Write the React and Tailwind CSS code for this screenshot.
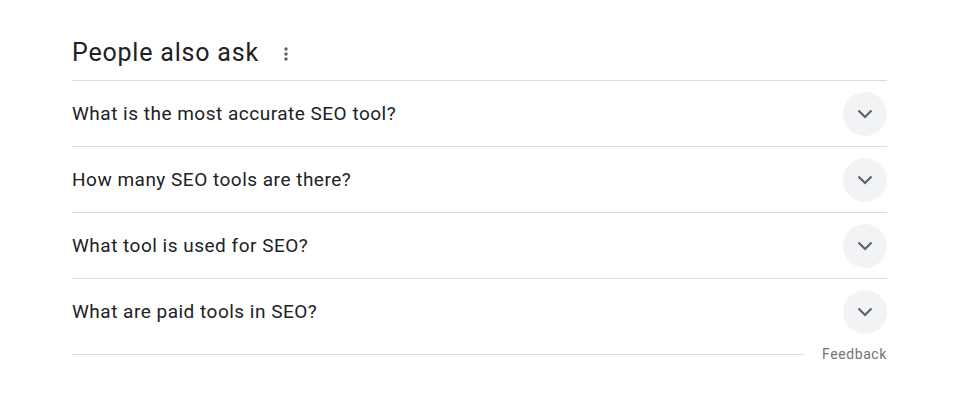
import React from "react";

const questions = [
  "What is the most accurate SEO tool?",
  "How many SEO tools are there?",
  "What tool is used for SEO?",
  "What are paid tools in SEO?",
];

function Chevron() {
  return (
    <svg width="16" height="10" viewBox="0 0 16 10" fill="none">
      <polyline points="1.5,1.5 8,8 14.5,1.5" stroke="#5f6368" strokeWidth="2.2" />
    </svg>
  );
}

export default function App() {
  return (
    <div
      className="w-[975px] h-[400px] bg-white"
      style={{ fontFamily: "Roboto, Arial, sans-serif" }}
    >
      <div className="ml-[72px] w-[815px] pt-[37px]">
        <div className="flex items-center h-[44px] border-b border-[#dadce0]">
          <span className="text-[25px] leading-[32px] tracking-[0.8px] text-[#202124] -mt-[11px]">
            People also ask
          </span>
          <span className="ml-[17px] -mt-[10px] flex items-center">
            <svg width="20" height="20" viewBox="0 0 24 24" fill="#5f6368">
              <path d="M12 8c1.1 0 2-.9 2-2s-.9-2-2-2-2 .9-2 2 .9 2 2 2zm0 2c-1.1 0-2 .9-2 2s.9 2 2 2 2-.9 2-2-.9-2-2-2zm0 6c-1.1 0-2 .9-2 2s.9 2 2 2 2-.9 2-2-.9-2-2-2z" />
            </svg>
          </span>
        </div>
        {questions.map((q, i) => (
          <div
            key={q}
            className={`flex items-center justify-between h-[66px] ${
              i < questions.length - 1 ? "border-b border-[#dadce0]" : ""
            }`}
          >
            <span className="text-[19px] leading-[24px] tracking-[0.5px] text-[#202124]">{q}</span>
            <div className="w-[44px] h-[44px] rounded-full bg-[#f1f3f4] flex items-center justify-center">
              <Chevron />
            </div>
          </div>
        ))}
        <div className="flex items-center h-[18px]">
          <div className="flex-1 border-t border-[#dadce0] mr-[18px]" />
          <span className="text-[14px] leading-[18px] tracking-[0.6px] text-[#70757a]">Feedback</span>
        </div>
      </div>
    </div>
  );
}
